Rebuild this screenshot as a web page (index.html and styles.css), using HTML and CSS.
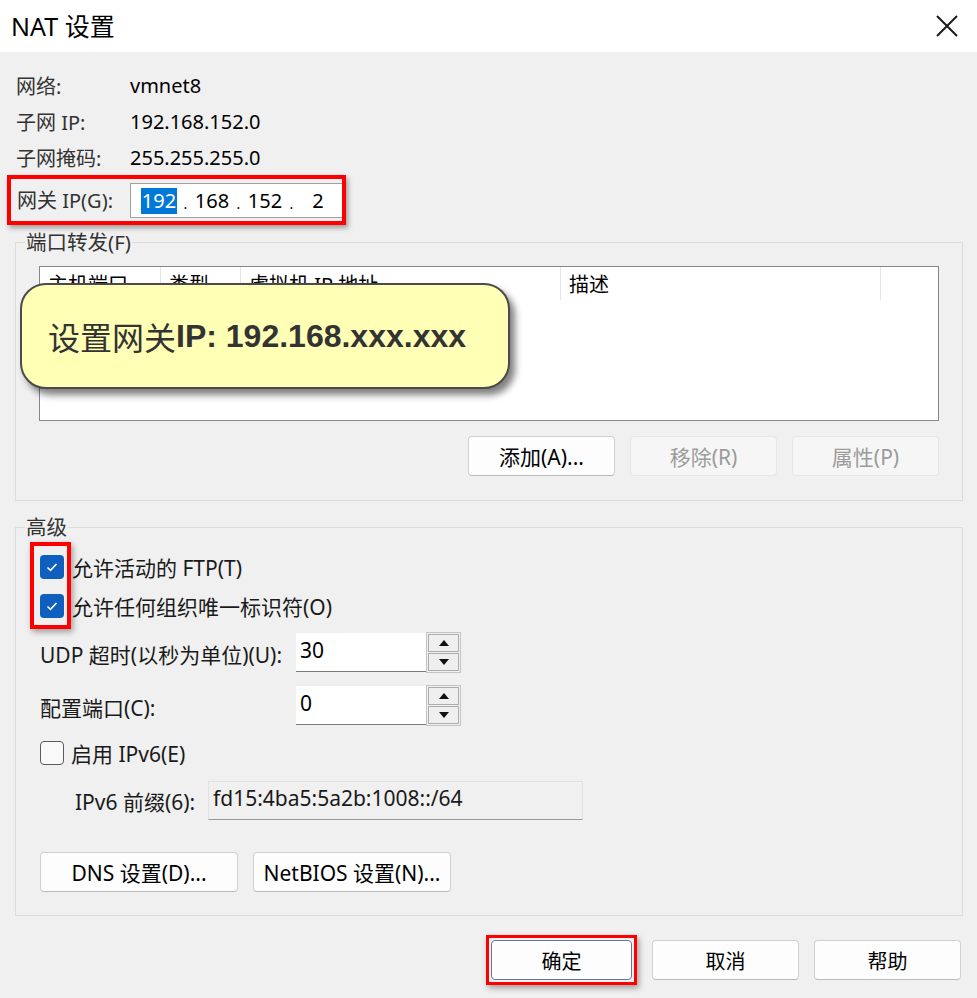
FILE: index.html
```html
<!DOCTYPE html>
<html lang="zh-CN">
<head>
<meta charset="utf-8">
<title>NAT 设置</title>
<link rel="stylesheet" href="styles.css">
</head>
<body>
<div class="dialog">
  <header class="titlebar">
    <span class="title">NAT 设置</span>
    <svg class="close" width="22" height="22" viewBox="0 0 22 22" aria-hidden="true">
      <path d="M1 1 L21 21 M21 1 L1 21" stroke="#1a1a1a" stroke-width="2" fill="none"/>
    </svg>
  </header>

  <main class="content">
    <div class="info">
      <div class="info-row"><span class="lbl">网络:</span><span class="val">vmnet8</span></div>
      <div class="info-row"><span class="lbl">子网 IP:</span><span class="val">192.168.152.0</span></div>
      <div class="info-row"><span class="lbl">子网掩码:</span><span class="val">255.255.255.0</span></div>
    </div>

    <div class="gw-mark">
      <span class="gw-lbl">网关 IP(G):</span>
      <div class="ipbox">
        <span class="seg"><span class="sel">192</span></span><span class="dot">.</span><span class="seg">168</span><span class="dot">.</span><span class="seg">152</span><span class="dot">.</span><span class="seg">2</span>
      </div>
    </div>

    <fieldset class="group pf">
      <legend>端口转发(F)</legend>
      <div class="table">
        <div class="thead">
          <span class="th w1">主机端口</span>
          <span class="th w2">类型</span>
          <span class="th w3">虚拟机 IP 地址</span>
          <span class="th w4">描述</span>
        </div>
        <div class="tip"><span class="tip-cjk">设置网关</span><b>IP: 192.168.xxx.xxx</b></div>
      </div>
      <div class="btn-row">
        <button class="btn">添加(A)...</button>
        <button class="btn" disabled>移除(R)</button>
        <button class="btn" disabled>属性(P)</button>
      </div>
    </fieldset>

    <fieldset class="group adv">
      <legend>高级</legend>
      <div class="cb-mark"></div>
      <div class="cb-row">
        <span class="cb on"><svg width="24" height="24" viewBox="0 0 24 24"><path d="M7.5 12.5 L10.5 15.3 L16.5 9" stroke="#fff" stroke-width="1.6" fill="none"/></svg></span>
        <span class="cb-text">允许活动的 FTP(T)</span>
      </div>
      <div class="cb-row">
        <span class="cb on"><svg width="24" height="24" viewBox="0 0 24 24"><path d="M7.5 12.5 L10.5 15.3 L16.5 9" stroke="#fff" stroke-width="1.6" fill="none"/></svg></span>
        <span class="cb-text">允许任何组织唯一标识符(O)</span>
      </div>

      <div class="spin-row first">
        <span class="spin-lbl">UDP 超时(以秒为单位)(U):</span>
        <span class="spin-input">30</span>
        <span class="spinner">
          <span class="sbtn"><svg width="10" height="6" viewBox="0 0 10 6"><path d="M0 6 L5 0 L10 6 Z" fill="#111"/></svg></span>
          <span class="sbtn"><svg width="10" height="6" viewBox="0 0 10 6"><path d="M0 0 L5 6 L10 0 Z" fill="#111"/></svg></span>
        </span>
      </div>
      <div class="spin-row second">
        <span class="spin-lbl">配置端口(C):</span>
        <span class="spin-input">0</span>
        <span class="spinner">
          <span class="sbtn"><svg width="10" height="6" viewBox="0 0 10 6"><path d="M0 6 L5 0 L10 6 Z" fill="#111"/></svg></span>
          <span class="sbtn"><svg width="10" height="6" viewBox="0 0 10 6"><path d="M0 0 L5 6 L10 0 Z" fill="#111"/></svg></span>
        </span>
      </div>

      <div class="cb-row ipv6">
        <span class="cb off"></span>
        <span class="cb-text">启用 IPv6(E)</span>
      </div>
      <div class="prefix-row">
        <span class="prefix-lbl">IPv6 前缀(6):</span>
        <span class="prefix-input">fd15:4ba5:5a2b:1008::/64</span>
      </div>

      <div class="extra-row">
        <button class="btn wide">DNS 设置(D)...</button>
        <button class="btn wide">NetBIOS 设置(N)...</button>
      </div>
    </fieldset>

    <div class="footer">
      <span class="ok-mark"><button class="btn ok">确定</button></span>
      <button class="btn">取消</button>
      <button class="btn">帮助</button>
    </div>
  </main>
</div>
</body>
</html>
```

FILE: styles.css
```css
* { box-sizing: border-box; }

html, body {
  margin: 0;
  padding: 0;
  background: #f0f0f0;
}

body {
  font-family: "Noto Sans", "Noto Sans CJK SC", sans-serif;
  font-size: 20px;
  color: #1a1a1a;
}

.dialog {
  width: 977px;
  height: 998px;
  background: #f0f0f0;
  overflow: hidden;
}

.titlebar {
  height: 52px;
  background: #ffffff;
  display: flex;
  align-items: center;
  justify-content: space-between;
  padding: 0 19px 0 11px;
}

.title {
  font-size: 25px;
  color: #000;
  line-height: 1;
}

.close { display: block; }

.content {
  padding: 15px 14px 0 15px;
}

/* info rows */
.info-row {
  display: flex;
  height: 36px;
  align-items: center;
}

.lbl {
  width: 115px;
  padding-left: 1px;
  color: #333;
}

.val { color: #000; }

/* gateway annotated row */
.gw-mark {
  display: flex;
  align-items: flex-start;
  width: 339px;
  height: 50px;
  margin-left: -8px;
  border: 4px solid #ff0000;
  box-shadow: 2px 3px 5px rgba(0, 0, 0, 0.35);
  padding: 4px 0 0 6px;
}

.gw-lbl {
  width: 113px;
  height: 35px;
  line-height: 35px;
  color: #333;
}

.ipbox {
  flex: 1;
  height: 35px;
  background: #fff;
  border: 1px solid #a0a0a0;
  border-right: none;
  display: flex;
  align-items: center;
  padding-left: 10px;
  color: #000;
}

.seg {
  width: 36px;
  text-align: center;
  line-height: 26px;
}

.sel {
  display: inline-block;
  width: 36px;
  background: #0078d7;
  color: #fff;
}

.dot {
  width: 17px;
  text-align: center;
  font-size: 14px;
  padding-top: 6px;
}

/* group boxes */
.group {
  margin: 0;
  border: 1px solid #dcdcdc;
  min-width: 0;
}

.group legend {
  padding: 0 1px;
  line-height: 24px;
  height: 24px;
  color: #333;
  font-size: 20.5px;
}

.pf {
  margin-top: 5px;
  padding: 12px 23px 24px 23px;
}

.pf legend { margin-left: -14px; }

.table {
  position: relative;
  height: 155px;
  background: #fff;
  border: 1px solid #828790;
}

.thead {
  display: flex;
  height: 33px;
}

.th {
  height: 33px;
  line-height: 36px;
  padding-left: 8px;
  border-right: 1px solid #e5e5e5;
  color: #000;
  white-space: nowrap;
  overflow: hidden;
}

.w1 { width: 121px; }
.w2 { width: 80px; }
.w3 { width: 320px; }
.w4 { width: 320px; }

.tip {
  position: absolute;
  left: -20px;
  top: 16px;
  width: 490px;
  height: 106px;
  background: #ffffb5;
  border: 2px solid #4b4b4b;
  border-radius: 26px;
  box-shadow: 5px 6px 7px rgba(0, 0, 0, 0.5);
  padding-left: 26px;
  display: flex;
  align-items: center;
  color: #333;
  font-size: 32px;
  white-space: nowrap;
}

.tip-cjk { font-family: "Noto Sans CJK SC", sans-serif; }

.tip b {
  font-family: "Liberation Sans", Arial, sans-serif;
  font-weight: bold;
}

.btn-row {
  display: flex;
  justify-content: flex-end;
  gap: 15px;
  margin-top: 15px;
}

.btn {
  font-family: inherit;
  font-size: 20px;
  color: #000;
  width: 147px;
  height: 40px;
  background: #fdfdfd;
  border: 1px solid #d0d0d0;
  border-bottom-color: #bcbcbc;
  border-radius: 4px;
  padding: 0;
}

.btn-row .btn,
.extra-row .btn { font-size: 21px; }

.btn:disabled {
  background: #f6f6f6;
  border-color: #e6e6e6;
  color: #9b9b9b;
}

/* advanced */
.adv {
  position: relative;
  margin-top: 14px;
  padding: 8px 23px 23px 24px;
  font-size: 21px;
}

.adv legend { margin-left: -15px; }

.cb-mark {
  position: absolute;
  left: 14px;
  top: 3px;
  width: 41px;
  height: 87px;
  border: 4px solid #ff0000;
  box-shadow: 2px 3px 6px rgba(0, 0, 0, 0.35);
}

.cb-row {
  display: flex;
  align-items: center;
  height: 39px;
}

.cb {
  width: 24px;
  height: 24px;
  border-radius: 4px;
  margin-right: 8px;
  flex: none;
}

.cb.on { background: #0f5fbe; }

.cb.on svg { display: block; }

.cb.off {
  border: 1.5px solid #5c5c5c;
  background: #f9f9f9;
}

.cb-text { color: #1a1a1a; }

.spin-row {
  display: flex;
  align-items: center;
  height: 41px;
}

.spin-row.first { margin-top: 7px; }
.spin-row.second { margin-top: 12px; }

.spin-lbl {
  width: 256px;
  color: #1a1a1a;
  padding-top: 2px;
  white-space: nowrap;
}

.spin-input {
  width: 130px;
  height: 39px;
  background: #fff;
  border-bottom: 1px solid #7a7a7a;
  padding: 2px 0 0 4px;
  line-height: 30px;
  color: #000;
}

.spinner {
  width: 35px;
  height: 41px;
  border: 1px solid #c4c4c4;
  padding: 1px;
  display: flex;
  flex-direction: column;
  gap: 1px;
}

.sbtn {
  flex: 1;
  background: #efefef;
  border: 1px solid #adadad;
  display: flex;
  align-items: center;
  justify-content: center;
}

.sbtn svg { display: block; }

.cb-row.ipv6 { margin-top: 7px; }
.ipv6 .cb { margin-right: 7px; }

.prefix-row {
  display: flex;
  align-items: center;
  height: 39px;
  margin-top: 9px;
  padding-left: 35px;
}

.prefix-lbl {
  width: 133px;
  color: #1a1a1a;
  white-space: nowrap;
}

.prefix-input {
  width: 375px;
  height: 39px;
  background: #f0f0f0;
  border: 1px solid #e2e2e2;
  border-bottom: 1px solid #9a9a9a;
  padding: 0 0 0 4px;
  line-height: 32px;
  color: #1a1a1a;
}

.extra-row {
  display: flex;
  gap: 15px;
  margin-top: 32px;
}

.btn.wide { width: 198px; }

/* footer */
.footer {
  display: flex;
  justify-content: flex-end;
  align-items: flex-start;
  margin-top: 19px;
  padding-right: 2px;
}

.footer > .btn {
  margin-left: 15px;
  margin-top: 5px;
}

.ok-mark {
  display: block;
  border: 3px solid #ff0000;
  padding: 2px;
  box-shadow: 2px 3px 6px rgba(0, 0, 0, 0.35);
}

.btn.ok {
  display: block;
  width: 141px;
  height: 40px;
  border: 1px solid #5e7896;
}
```
